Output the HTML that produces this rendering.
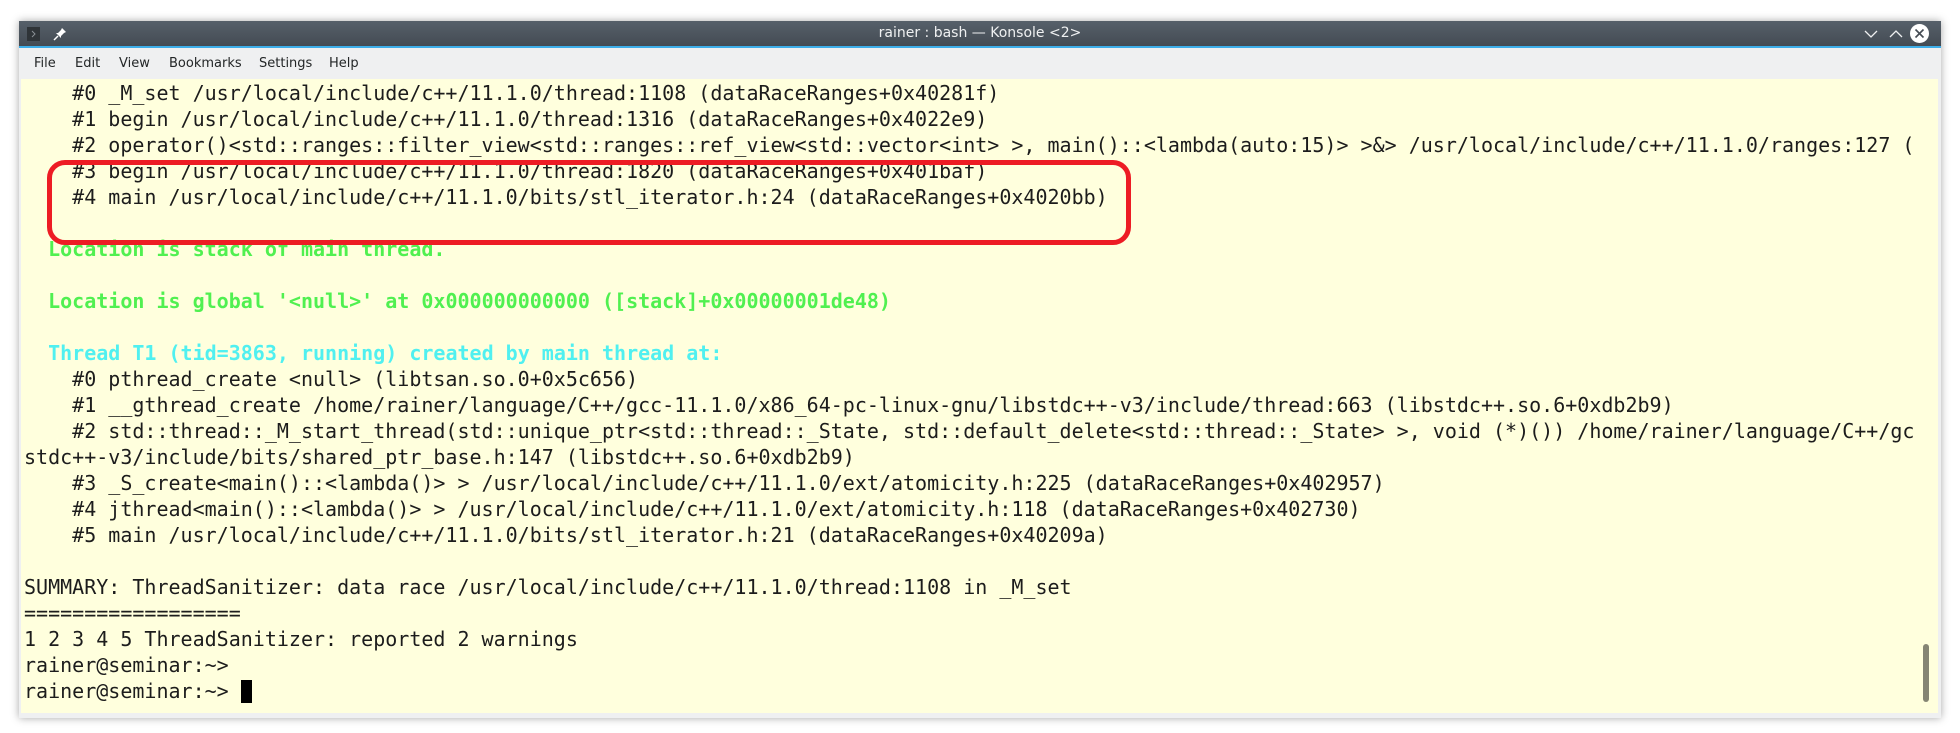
<!DOCTYPE html>
<html><head><meta charset="utf-8">
<style>
html,body{margin:0;padding:0;background:#fff;width:1960px;height:733px;overflow:hidden;position:relative}
.win{position:absolute;left:19px;top:21px;width:1922px;height:697px;background:#eff0f1;box-shadow:0 0 8px rgba(0,0,0,0.35)}
.title{position:absolute;left:0;top:0;width:1922px;height:25px;background:linear-gradient(#56606a,#444b53);border-bottom:2px solid #3daee9}
.ttext{position:absolute;left:0;width:100%;top:4px;text-align:center;color:#eff0f1;font:14px "DejaVu Sans","Liberation Sans",sans-serif}
.menu{position:absolute;top:35px;font:13px "DejaVu Sans","Liberation Sans",sans-serif;color:#232627}
.term{position:absolute;left:2px;top:58px;width:1917px;height:634px;background:#ffffdd;overflow:hidden}
.txt{position:absolute;left:24px;top:80px;font:20px "DejaVu Sans Mono","Liberation Mono",monospace;line-height:26px;white-space:pre;color:#1c1c1c;width:2400px}
.g{color:#50f050;font-weight:bold}
.c{color:#50f0f0;font-weight:bold}
.box{position:absolute;left:47px;top:160px;width:1074px;height:75px;border:5px solid #ed1c24;border-radius:18px}
.sb{position:absolute;left:1923px;top:644px;width:6px;height:58px;background:#858574;border-radius:3px}
.cur{position:absolute;left:241px;top:680px;width:11px;height:23px;background:#000}
</style></head><body>
<div class="win">
 <div class="title">
  <svg style="position:absolute;left:8px;top:6px" width="13" height="14"><rect width="13" height="14" fill="#2f3438"/><path d="M5 4 L8 7 L5 10" stroke="#8a9096" fill="none" stroke-width="1"/></svg>
  <svg style="position:absolute;left:34px;top:6px" width="14" height="14"><path d="M9 1 L13 5 L11 6 L8 9 L8 11 L3 6 L5 6 L8 3 Z" fill="#fff"/><path d="M5 9 L1 13" stroke="#fff" stroke-width="1.5"/></svg>
  <div class="ttext">rainer : bash — Konsole &lt;2&gt;</div>
  <svg style="position:absolute;left:1845px;top:8px" width="14" height="10"><path d="M1 2 L7 8 L13 2" stroke="#eff0f1" fill="none" stroke-width="1.3"/></svg>
  <svg style="position:absolute;left:1870px;top:8px" width="14" height="10"><path d="M1 8 L7 2 L13 8" stroke="#eff0f1" fill="none" stroke-width="1.3"/></svg>
  <svg style="position:absolute;left:1891px;top:3px" width="19" height="19"><circle cx="9.5" cy="9.5" r="9.5" fill="#fff"/><path d="M5.5 5.5 L13.5 13.5 M13.5 5.5 L5.5 13.5" stroke="#444b53" stroke-width="1.6"/></svg>
 </div>
 <span class="menu" style="left:15px">File</span>
 <span class="menu" style="left:56px">Edit</span>
 <span class="menu" style="left:100px">View</span>
 <span class="menu" style="left:150px">Bookmarks</span>
 <span class="menu" style="left:240px">Settings</span>
 <span class="menu" style="left:310px">Help</span>
 <div class="term"></div>
</div>
<div class="txt">    #0 _M_set /usr/local/include/c++/11.1.0/thread:1108 (dataRaceRanges+0x40281f)
    #1 begin /usr/local/include/c++/11.1.0/thread:1316 (dataRaceRanges+0x4022e9)
    #2 operator()&lt;std::ranges::filter_view&lt;std::ranges::ref_view&lt;std::vector&lt;int&gt; &gt;, main()::&lt;lambda(auto:15)&gt; &gt;&amp;&gt; /usr/local/include/c++/11.1.0/ranges:127 (
    #3 begin /usr/local/include/c++/11.1.0/thread:1820 (dataRaceRanges+0x401baf)
    #4 main /usr/local/include/c++/11.1.0/bits/stl_iterator.h:24 (dataRaceRanges+0x4020bb)

  <span class="g">Location is stack of main thread.</span>

  <span class="g">Location is global '&lt;null&gt;' at 0x000000000000 ([stack]+0x00000001de48)</span>

  <span class="c">Thread T1 (tid=3863, running) created by main thread at:</span>
    #0 pthread_create &lt;null&gt; (libtsan.so.0+0x5c656)
    #1 __gthread_create /home/rainer/language/C++/gcc-11.1.0/x86_64-pc-linux-gnu/libstdc++-v3/include/thread:663 (libstdc++.so.6+0xdb2b9)
    #2 std::thread::_M_start_thread(std::unique_ptr&lt;std::thread::_State, std::default_delete&lt;std::thread::_State&gt; &gt;, void (*)()) /home/rainer/language/C++/gc
stdc++-v3/include/bits/shared_ptr_base.h:147 (libstdc++.so.6+0xdb2b9)
    #3 _S_create&lt;main()::&lt;lambda()&gt; &gt; /usr/local/include/c++/11.1.0/ext/atomicity.h:225 (dataRaceRanges+0x402957)
    #4 jthread&lt;main()::&lt;lambda()&gt; &gt; /usr/local/include/c++/11.1.0/ext/atomicity.h:118 (dataRaceRanges+0x402730)
    #5 main /usr/local/include/c++/11.1.0/bits/stl_iterator.h:21 (dataRaceRanges+0x40209a)

SUMMARY: ThreadSanitizer: data race /usr/local/include/c++/11.1.0/thread:1108 in _M_set
==================
1 2 3 4 5 ThreadSanitizer: reported 2 warnings
rainer@seminar:~&gt;
rainer@seminar:~&gt; </div>
<div class="box"></div>
<div class="sb"></div>
<div class="cur"></div>
</body></html>
